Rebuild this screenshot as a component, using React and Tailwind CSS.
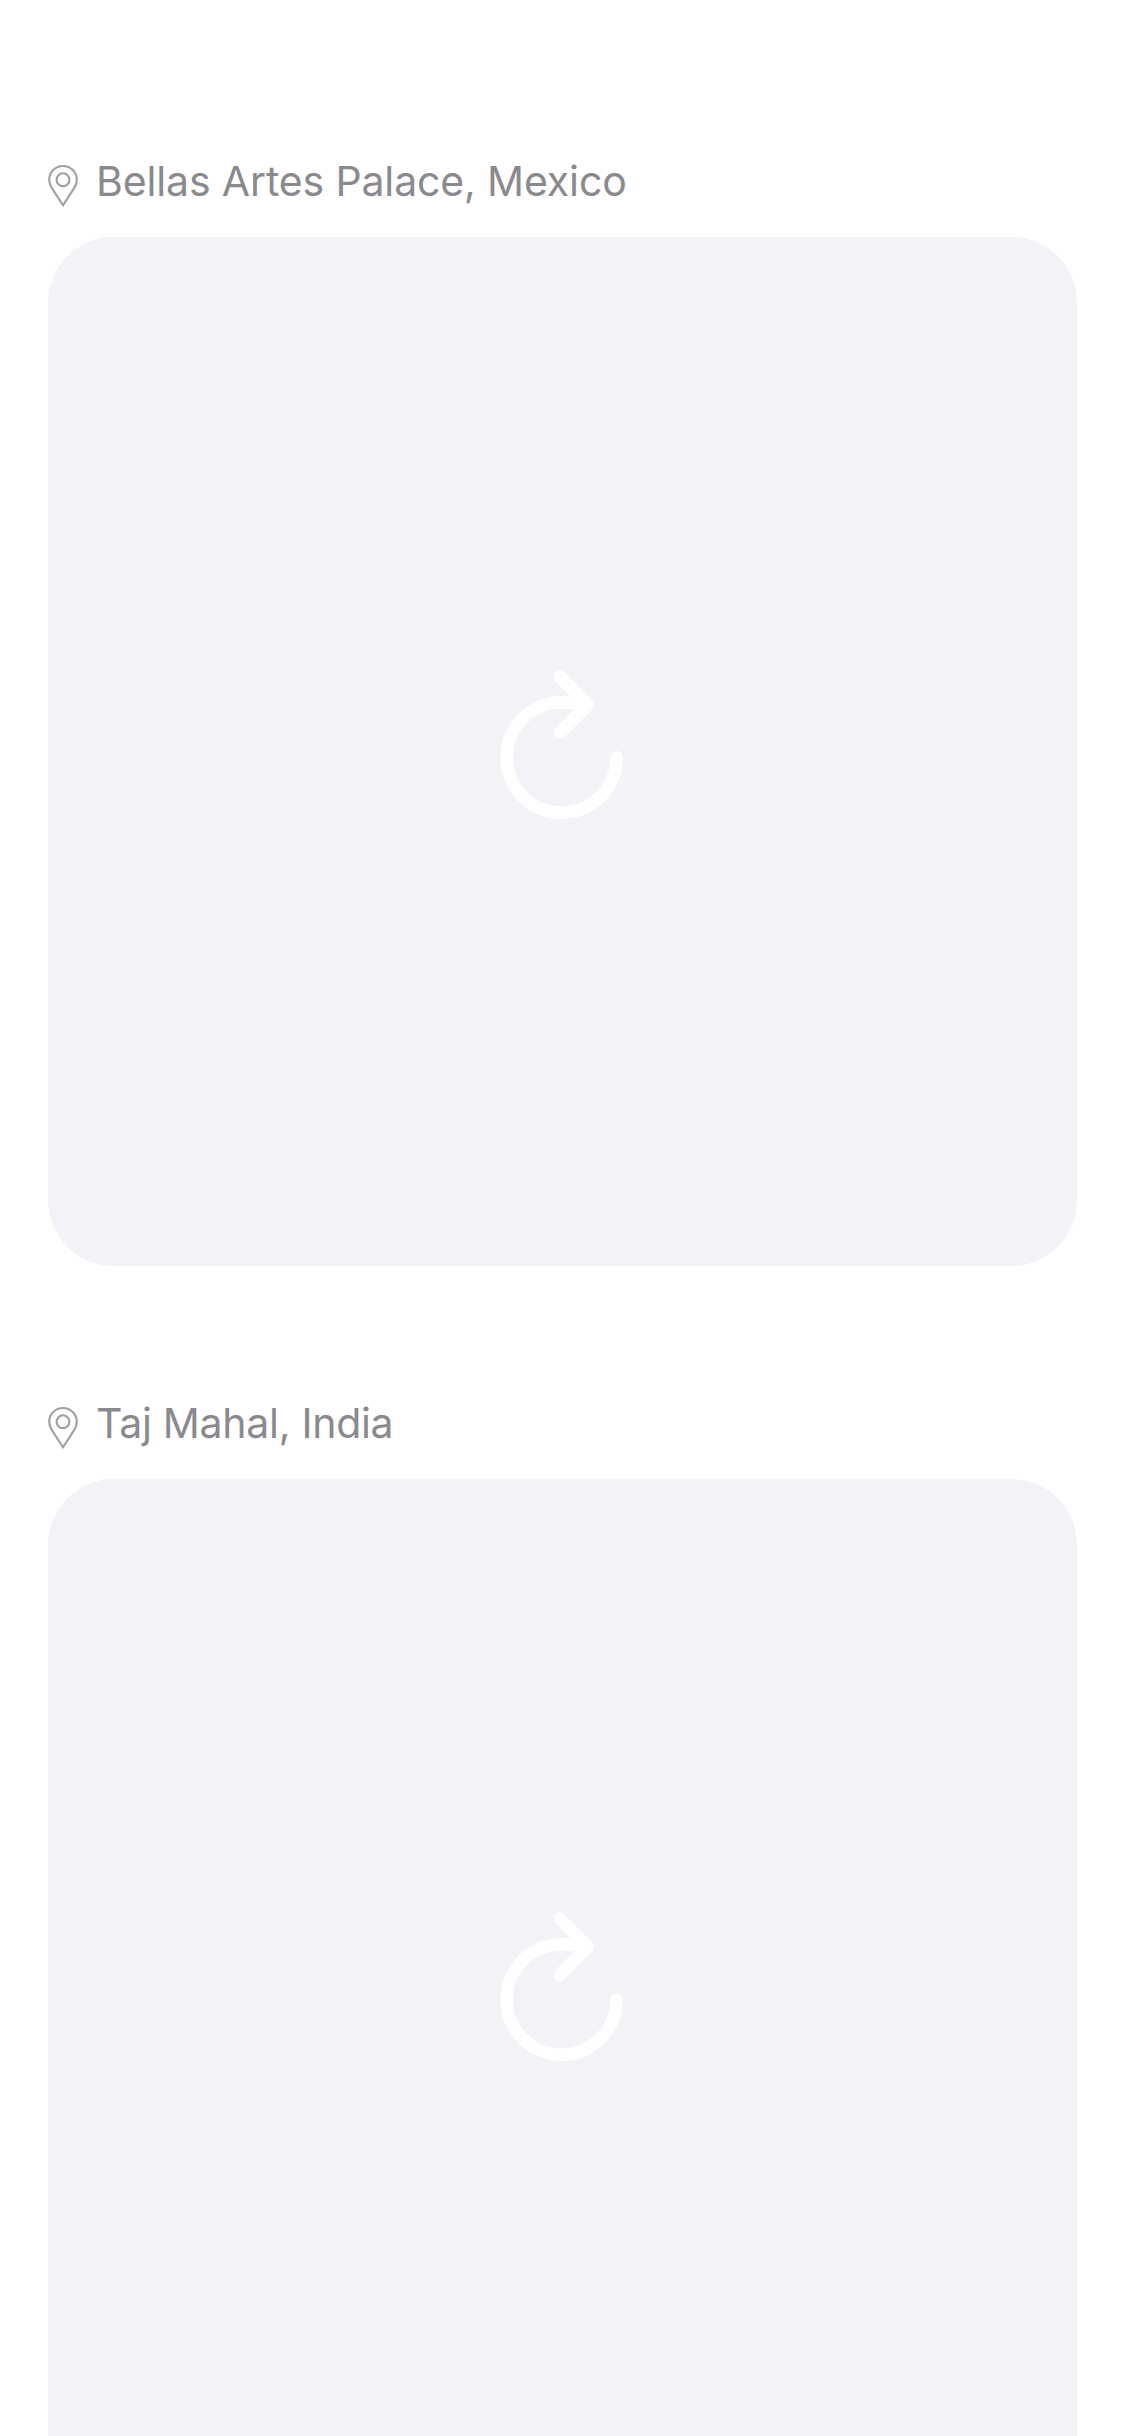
const places = [
  { name: "Bellas Artes Palace, Mexico", spacing: "tracking-[-0.14px]" },
  { name: "Taj Mahal, India", spacing: "tracking-[-0.28px]" },
];

function PinIcon() {
  return (
    <svg className="mt-[14px] h-[44px] w-[30px] shrink-0" viewBox="0 0 30 44" fill="none" stroke="#a0a0a0" strokeWidth="2.1">
      <path d="M15 41.3 L3.4 23.4 C1.9 20.8 1.2 18.4 1.2 15.6 C1.2 8 7.2 2 15 2 C22.8 2 28.8 8 28.8 15.6 C28.8 18.4 28.1 20.8 26.6 23.4 Z" />
      <circle cx="15" cy="15.7" r="6.4" />
    </svg>
  );
}

function ReloadIcon() {
  return (
    <svg className="h-[150px] w-[125px]" viewBox="500 670 125 150" fill="none" stroke="white" strokeWidth="12.7" strokeLinecap="round" strokeLinejoin="round">
      <path d="M616.6 757.4 A55 55.2 0 1 1 561.6 702.3 Q574 702.3 586 704.7" />
      <path d="M559.9 676.7 L587.8 704.8 L559.9 732.7" />
    </svg>
  );
}

function PlaceCard({ name, spacing }) {
  return (
    <section>
      <div className="flex h-[87px] items-start">
        <PinIcon />
        <h2 className={`-mt-px ml-[18px] whitespace-nowrap text-[41px] leading-[64px] font-normal text-[#8a8a8e] ${spacing}`}>{name}</h2>
      </div>
      <div className="flex h-[1029px] items-start rounded-[66px] bg-[#f2f2f7] pt-[433px] pl-[452px]">
        <ReloadIcon />
      </div>
    </section>
  );
}

export default function App() {
  return (
    <main className="flex h-[2436px] w-[1125px] flex-col gap-[126px] overflow-hidden bg-white px-[48px] pt-[150px] font-['Inter',sans-serif]">
      {places.map((place) => (
        <PlaceCard key={place.name} {...place} />
      ))}
    </main>
  );
}
